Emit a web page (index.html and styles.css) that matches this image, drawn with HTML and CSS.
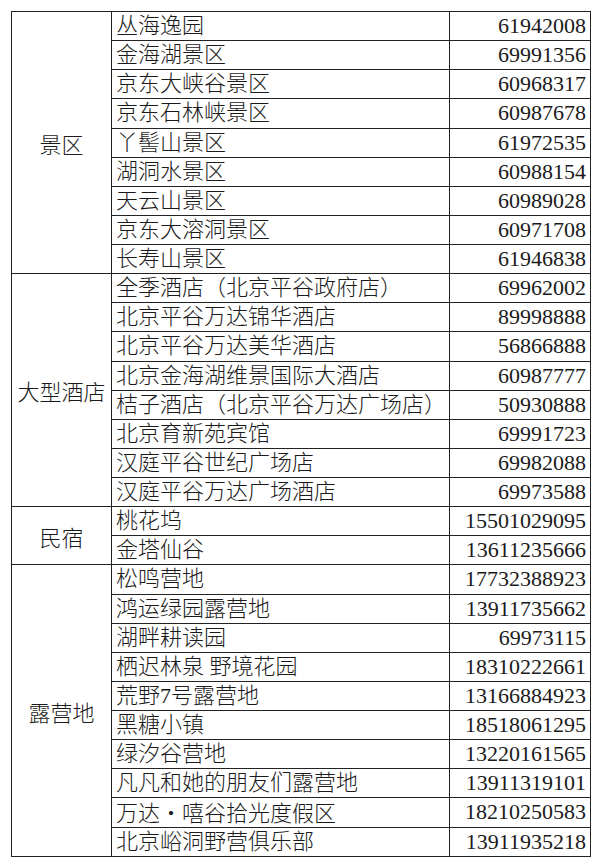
FILE: index.html
```html
<!DOCTYPE html>
<html lang="zh-CN">
<head>
<meta charset="utf-8">
<title>平谷景区与住宿联系电话</title>
<link rel="stylesheet" href="styles.css">
</head>
<body>
<table class="sheet">
  <colgroup>
    <col class="c-cat">
    <col class="c-name">
    <col class="c-tel">
  </colgroup>
  <tbody>
    <tr><td class="cat" rowspan="9">景区</td><td class="name">丛海逸园</td><td class="tel">61942008</td></tr>
    <tr><td class="name">金海湖景区</td><td class="tel">69991356</td></tr>
    <tr><td class="name">京东大峡谷景区</td><td class="tel">60968317</td></tr>
    <tr><td class="name">京东石林峡景区</td><td class="tel">60987678</td></tr>
    <tr><td class="name">丫髻山景区</td><td class="tel">61972535</td></tr>
    <tr><td class="name">湖洞水景区</td><td class="tel">60988154</td></tr>
    <tr><td class="name">天云山景区</td><td class="tel">60989028</td></tr>
    <tr><td class="name">京东大溶洞景区</td><td class="tel">60971708</td></tr>
    <tr><td class="name">长寿山景区</td><td class="tel">61946838</td></tr>

    <tr><td class="cat" rowspan="8">大型酒店</td><td class="name">全季酒店（北京平谷政府店）</td><td class="tel">69962002</td></tr>
    <tr><td class="name">北京平谷万达锦华酒店</td><td class="tel">89998888</td></tr>
    <tr><td class="name">北京平谷万达美华酒店</td><td class="tel">56866888</td></tr>
    <tr><td class="name">北京金海湖维景国际大酒店</td><td class="tel">60987777</td></tr>
    <tr><td class="name">桔子酒店（北京平谷万达广场店）</td><td class="tel">50930888</td></tr>
    <tr><td class="name">北京育新苑宾馆</td><td class="tel">69991723</td></tr>
    <tr><td class="name">汉庭平谷世纪广场店</td><td class="tel">69982088</td></tr>
    <tr><td class="name">汉庭平谷万达广场酒店</td><td class="tel">69973588</td></tr>

    <tr><td class="cat" rowspan="2">民宿</td><td class="name">桃花坞</td><td class="tel">15501029095</td></tr>
    <tr><td class="name">金塔仙谷</td><td class="tel">13611235666</td></tr>

    <tr><td class="cat" rowspan="10">露营地</td><td class="name">松鸣营地</td><td class="tel">17732388923</td></tr>
    <tr><td class="name">鸿运绿园露营地</td><td class="tel">13911735662</td></tr>
    <tr><td class="name">湖畔耕读园</td><td class="tel">69973115</td></tr>
    <tr><td class="name">栖迟林泉 野境花园</td><td class="tel">18310222661</td></tr>
    <tr><td class="name">荒野7号露营地</td><td class="tel">13166884923</td></tr>
    <tr><td class="name">黑糖小镇</td><td class="tel">18518061295</td></tr>
    <tr><td class="name">绿汐谷营地</td><td class="tel">13220161565</td></tr>
    <tr><td class="name">凡凡和她的朋友们露营地</td><td class="tel">13911319101</td></tr>
    <tr><td class="name">万达<span class="dot">·</span>嘻谷拾光度假区</td><td class="tel">18210250583</td></tr>
    <tr><td class="name">北京峪洞野营俱乐部</td><td class="tel">13911935218</td></tr>
  </tbody>
</table>
</body>
</html>
```

FILE: styles.css
```css
html, body {
  margin: 0;
  padding: 0;
  background: #ffffff;
}

body {
  padding: 11px 0 0 11px;
  font-family: "Liberation Serif", "Noto Sans CJK SC", serif;
  color: #1a1a1a;
}

.sheet {
  border-collapse: collapse;
  table-layout: fixed;
  width: 579px;
  font-size: 22px;
  line-height: 1;
}

.c-cat { width: 100px; }
.c-name { width: 338px; }
.c-tel { width: 141px; }

.sheet td {
  border: 1px solid #222222;
  padding: 0 4px;
  height: 28.14px;
  vertical-align: middle;
  white-space: nowrap;
}

.cat {
  text-align: center;
  font-family: "Noto Sans CJK SC", sans-serif;
  font-weight: 300;
}

.name {
  text-align: left;
  font-family: "Liberation Serif", "Noto Sans CJK SC", sans-serif;
  font-weight: 300;
}

.dot {
  font-family: "Noto Sans CJK SC", sans-serif;
}

.tel {
  text-align: right;
  font-family: "Liberation Serif", serif;
}
```
